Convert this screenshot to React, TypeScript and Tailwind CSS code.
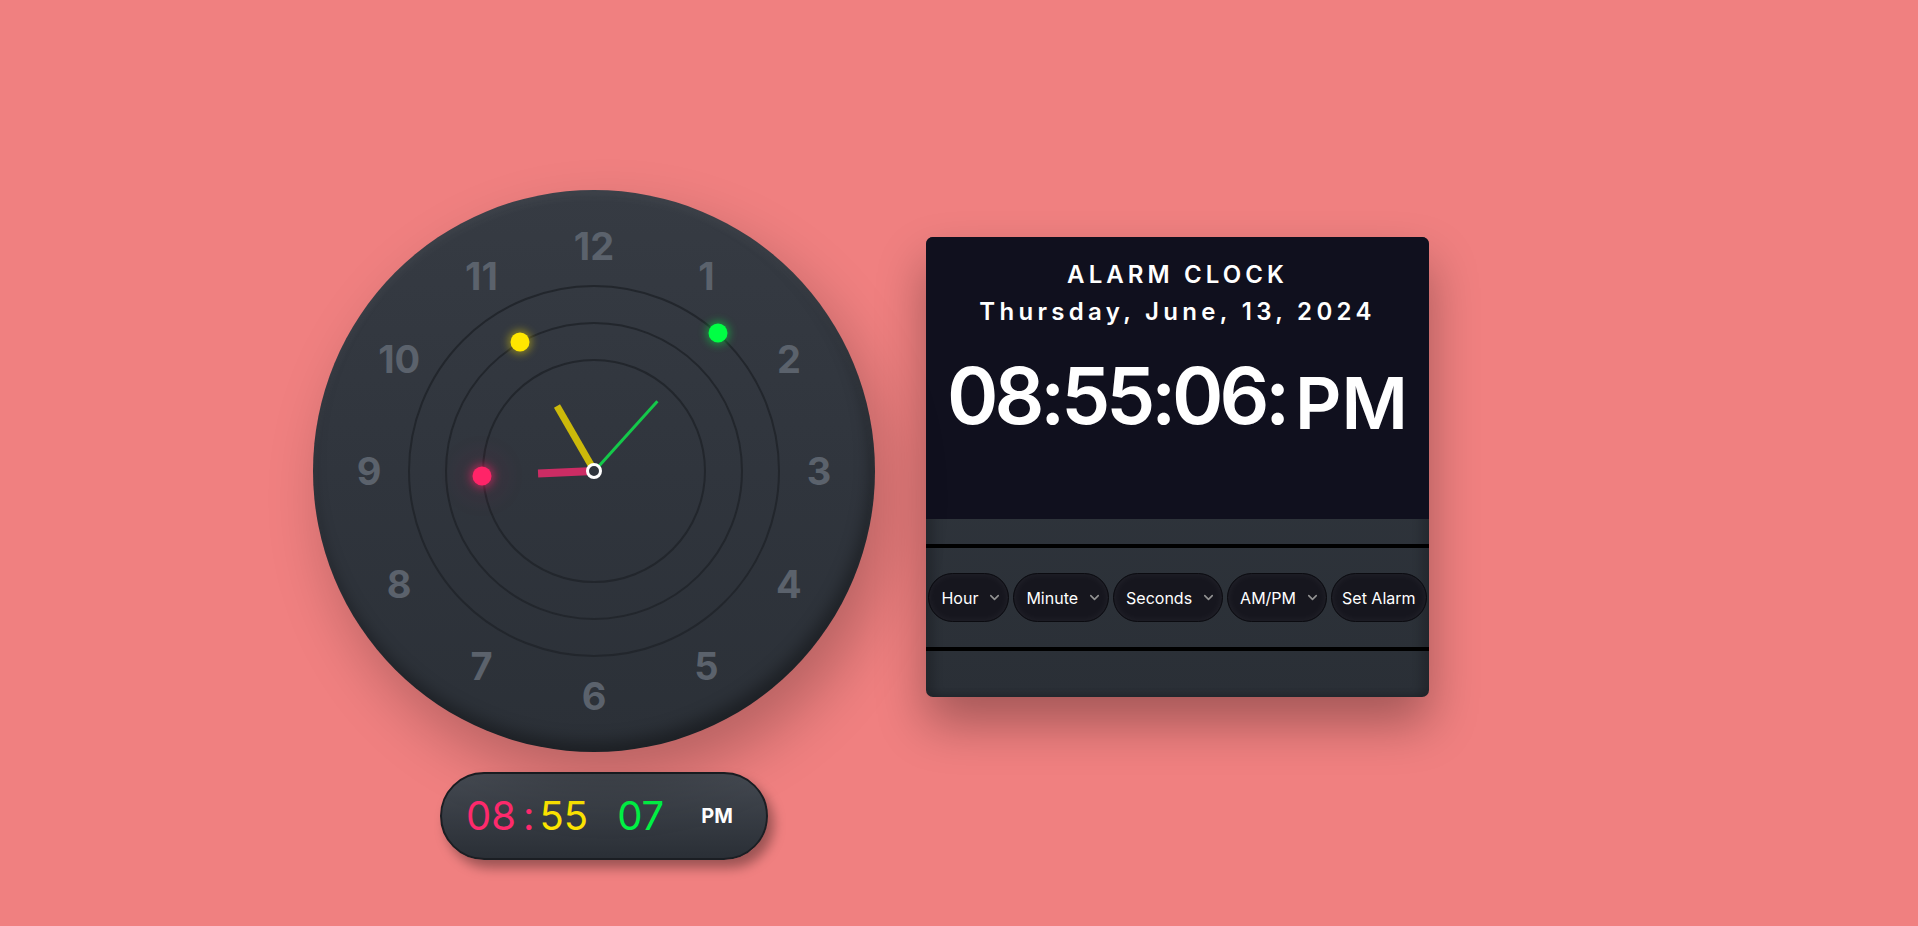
import { ChevronDown } from 'lucide-react';

const HOURS = 8;
const MINUTES = 55;
const SECONDS = 7;

const C = 281; // centre of the dial, px
const NUM_R = 225;

const hourAngle = HOURS * 30 + MINUTES * 0.5;
const minuteAngle = MINUTES * 6;
const secondAngle = SECONDS * 6;

function polar(angle: number, r: number) {
  const rad = (angle * Math.PI) / 180;
  return { left: C + r * Math.sin(rad), top: C - r * Math.cos(rad) };
}

const DOTS = [
  { angle: hourAngle, r: 112, cls: 'bg-[#ff2468] shadow-[0_0_8px_2px_rgba(255,36,104,0.55),0_0_30px_8px_rgba(255,36,104,0.12)]' },
  { angle: minuteAngle, r: 149, cls: 'bg-[#ffe600] shadow-[0_0_8px_2px_rgba(255,230,0,0.45)]' },
  { angle: secondAngle, r: 186, cls: 'bg-[#00ff44] shadow-[0_0_8px_2px_rgba(0,255,68,0.45)]' },
];

const HANDS = [
  { angle: hourAngle, len: 56, w: 8, cls: 'bg-[#cc2c64]' },
  { angle: minuteAngle, len: 75, w: 7, cls: 'bg-[#ccb90a]' },
  { angle: secondAngle, len: 94, w: 3, cls: 'bg-[#14c94a]' },
];

function Dial() {
  return (
    <div className="relative h-[562px] w-[562px] shrink-0 rounded-full bg-linear-to-b from-[#363b43] via-[#30353d] to-[#2b3037] shadow-[inset_0_6px_10px_rgba(255,255,255,0.05),inset_-4px_-10px_16px_rgba(0,0,0,0.35),14px_28px_60px_rgba(0,0,0,0.24)]">
      {[372, 298, 224].map((d) => (
        <span
          key={d}
          className="absolute rounded-full border-2 border-[#22262c]"
          style={{ width: d, height: d, left: C - d / 2, top: C - d / 2 }}
        />
      ))}
      {Array.from({ length: 12 }, (_, i) => {
        const n = i === 0 ? 12 : i;
        const p = polar(i * 30, NUM_R);
        return (
          <span
            key={n}
            className="absolute -translate-x-1/2 -translate-y-1/2 font-['Inter',sans-serif] text-[38px] font-bold leading-none text-[#5b626c]"
            style={p}
          >
            {n}
          </span>
        );
      })}
      {HANDS.map((h) => (
        <span
          key={h.len}
          className={`absolute ${h.cls}`}
          style={{
            left: C - h.w / 2,
            top: C - h.len,
            width: h.w,
            height: h.len,
            transform: `rotate(${h.angle}deg)`,
            transformOrigin: '50% 100%',
          }}
        />
      ))}
      {DOTS.map((d) => (
        <span
          key={d.r}
          className={`absolute h-[19px] w-[19px] -translate-x-1/2 -translate-y-1/2 rounded-full ${d.cls}`}
          style={polar(d.angle, d.r)}
        />
      ))}
      <span
        className="absolute h-4 w-4 -translate-x-1/2 -translate-y-1/2 rounded-full border-[3px] border-white bg-[#2f343c]"
        style={{ left: C, top: C }}
      />
    </div>
  );
}

function DigitalPill() {
  return (
    <div className="ml-[127px] mt-[20px] flex h-[88px] w-[328px] items-center rounded-full border-2 border-[#1b1e23] bg-linear-to-b from-[#454a52] to-[#2a2f36] pl-[24px] font-['Inter',sans-serif] shadow-[6px_8px_12px_rgba(0,0,0,0.35)]">
      <span className="text-[40px] leading-none text-[#ff2a6d]">08</span>
      <span className="ml-[7px] mr-[5px] text-[40px] leading-none text-[#ff2a6d]">:</span>
      <span className="text-[40px] leading-none text-[#ffe600]">55</span>
      <span className="ml-[29px] text-[40px] leading-none text-[#00f545]">07</span>
      <span className="ml-[37px] text-[20px] font-bold leading-none text-white">PM</span>
    </div>
  );
}

const SELECTS = ['Hour', 'Minute', 'Seconds', 'AM/PM'];

function AlarmPanel() {
  return (
    <div className="mt-[47px] flex h-[460px] w-[503px] shrink-0 flex-col overflow-hidden rounded-[7px] bg-linear-to-b from-[#333941] to-[#2a2f36] font-['Inter',sans-serif] text-white shadow-[inset_8px_0_10px_rgba(0,0,0,0.18),inset_-8px_0_10px_rgba(0,0,0,0.18),0_26px_50px_rgba(0,0,0,0.32)]">
      <div className="flex h-[282px] flex-col items-center bg-[#10101e] pt-[26px]">
        <h1 className="text-[24px] font-semibold leading-none tracking-[0.17em]">ALARM CLOCK</h1>
        <div className="mt-[13px] text-[24px] font-semibold leading-none tracking-[0.18em]">Thursday, June, 13, 2024</div>
        <div className="mt-[33px] flex items-start">
          <span className="text-[78px] font-semibold leading-none tracking-[-0.052em]">08:55:06:</span>
          <span className="ml-[9px] mt-[10px] text-[72px] font-semibold leading-none">PM</span>
        </div>
      </div>
      <div className="h-[25px]" />
      <div className="flex h-[107px] items-center justify-center gap-[4px] border-y-4 border-black">
        {SELECTS.map((s) => (
          <div
            key={s}
            className="flex h-[49px] items-center gap-[9px] rounded-full border border-[#0b0b10] bg-[#16161e] pl-[12px] pr-[6px] text-[16px] shadow-[inset_0_0_8px_rgba(255,255,255,0.06)]"
          >
            <span>{s}</span>
            <ChevronDown className="h-[15px] w-[15px] text-[#939393]" strokeWidth={2.5} />
          </div>
        ))}
        <div className="flex h-[49px] items-center rounded-full border border-[#0b0b10] bg-[#16161e] px-[10px] text-[16px] shadow-[inset_0_0_8px_rgba(255,255,255,0.06)]">
          Set Alarm
        </div>
      </div>
      <div className="flex-1" />
    </div>
  );
}

export default function App() {
  return (
    <div className="flex min-h-screen w-full items-start gap-[51px] bg-[#f08080] pl-[313px] pt-[190px]">
      <div className="flex flex-col items-start">
        <Dial />
        <DigitalPill />
      </div>
      <AlarmPanel />
    </div>
  );
}
